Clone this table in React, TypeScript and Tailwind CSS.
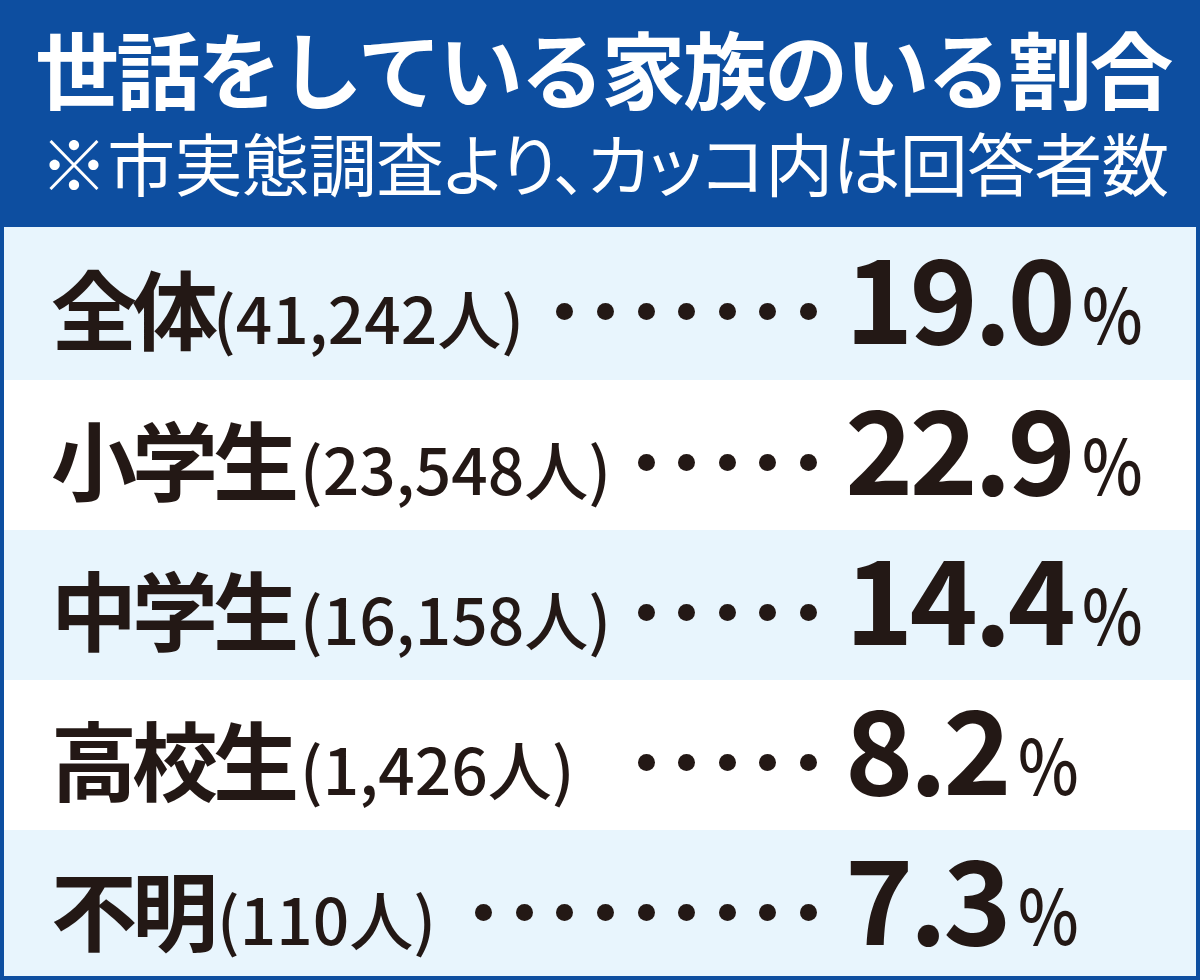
import React from "react"

const rows = [
  { label: "全体", count: "(41,242人)", dots: 7, value: "19.0", bg: "bg-[#e8f5fd]", h: "h-[153px]", pt: "pt-[8px]", gap: "" },
  { label: "小学生", count: "(23,548人)", dots: 5, value: "22.9", bg: "bg-white", h: "h-[150px]", pt: "pt-[6px]", gap: "ml-[6px]" },
  { label: "中学生", count: "(16,158人)", dots: 5, value: "14.4", bg: "bg-[#e8f5fd]", h: "h-[150px]", pt: "pt-[6px]", gap: "ml-[6px]" },
  { label: "高校生", count: "(1,426人)", dots: 5, value: "8.2", bg: "bg-white", h: "h-[150px]", pt: "pt-[6px]", gap: "ml-[6px]" },
  { label: "不明", count: "(110人)", dots: 9, value: "7.3", bg: "bg-[#e8f5fd]", h: "flex-1", pt: "pt-[6px]", gap: "ml-[4px]" },
]

function Dots({ count }: { count: number }) {
  return (
    <div className="flex-1 text-right text-[64px] leading-none">
      {Array.from({ length: count }).map((_, i) => (
        <span
          key={i}
          className="inline-block w-[17px] h-[17px] rounded-full bg-[#231815] mb-[24px] ml-[23.6px] first:ml-0"
        />
      ))}
    </div>
  )
}

export default function App() {
  return (
    <div className="w-[1200px] h-[980px] flex flex-col border-[4px] border-t-0 border-[#0d4ea0] bg-[#0d4ea0] font-['Noto_Sans_CJK_JP',sans-serif] text-[#231815]">
      <header className="h-[227px] shrink-0 flex flex-col pt-[25px] pl-[31px] text-white">
        <h1 className="text-[84px] leading-none font-bold tracking-[-2.7px] whitespace-nowrap">
          世話をしている家族のいる割合
        </h1>
        <p className="mt-[19px] ml-[5px] text-[68px] leading-none font-normal tracking-[-0.8px] whitespace-nowrap [font-feature-settings:'palt']">
          ※市実態調査より、カッコ内は回答者数
        </p>
      </header>

      <div className="flex-1 flex flex-col">
        {rows.map((row) => (
          <div key={row.label} className={`${row.h} ${row.bg} ${row.pt} flex items-baseline`}>
            <div className="flex-1 flex items-baseline pl-[47px] pr-[28px]">
              <span className="text-[86px] leading-none font-bold tracking-[-5px] whitespace-nowrap">
                {row.label}
              </span>
              <span className={`${row.gap} text-[64px] leading-none font-medium whitespace-nowrap`}>
                {row.count}
              </span>
              <Dots count={row.dots} />
            </div>
            <div className="w-[351px] flex items-baseline">
              <span className="text-[116px] leading-none font-bold tracking-[-4px]">{row.value}</span>
              <span className="ml-[10px] inline-block origin-left scale-x-[0.85] text-[76px] leading-none font-medium">
                %
              </span>
            </div>
          </div>
        ))}
      </div>
    </div>
  )
}
